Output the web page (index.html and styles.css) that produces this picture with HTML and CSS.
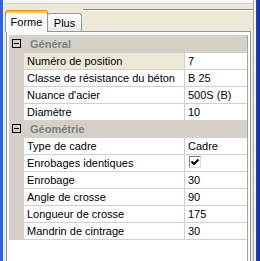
FILE: index.html
```html
<!DOCTYPE html>
<html lang="fr">
<head>
    <meta charset="UTF-8">
    <title>Propriétés</title>
    <link rel="stylesheet" href="styles.css">
</head>
<body>
    <div class="window">
        <div class="frame-left"></div>
        <div class="client">
            <div class="topbar"></div>
            <div class="tabstrip">
                <div class="tab active">Forme</div>
                <div class="tab">Plus</div>
                <div class="strip-line"></div>
            </div>
            <div class="panel">
                <div class="grid">
                    <div class="cat"><span class="toggle"></span><span class="cat-name">Général</span></div>
                    <div class="row selected"><span class="label">Numéro de position</span><span class="value">7</span></div>
                    <div class="row"><span class="label">Classe de résistance du béton</span><span class="value">B 25</span></div>
                    <div class="row"><span class="label">Nuance d'acier</span><span class="value">500S (B)</span></div>
                    <div class="row"><span class="label">Diamètre</span><span class="value">10</span></div>
                    <div class="cat"><span class="toggle"></span><span class="cat-name">Géométrie</span></div>
                    <div class="row"><span class="label">Type de cadre</span><span class="value">Cadre</span></div>
                    <div class="row">
                        <span class="label">Enrobages identiques</span>
                        <span class="value">
                            <span class="check">
                                <svg width="10" height="10" viewBox="0 0 10 10"><polyline points="1.5,4.5 4,7 8.5,2.5" fill="none" stroke="#000" stroke-width="2"/></svg>
                            </span>
                        </span>
                    </div>
                    <div class="row"><span class="label">Enrobage</span><span class="value">30</span></div>
                    <div class="row"><span class="label">Angle de crosse</span><span class="value">90</span></div>
                    <div class="row"><span class="label">Longueur de crosse</span><span class="value">175</span></div>
                    <div class="row"><span class="label">Mandrin de cintrage</span><span class="value">30</span></div>
                </div>
            </div>
        </div>
        <div class="frame-inner"></div>
        <div class="frame-right"></div>
    </div>
</body>
</html>
```

FILE: styles.css
```css
* {
    box-sizing: border-box;
}
html, body {
    margin: 0;
    height: 100%;
}
body {
    font-family: "Liberation Sans", Arial, sans-serif;
    font-size: 11px;
    color: #000;
    background-color: #ECE9D8;
    overflow: hidden;
}
.window {
    display: flex;
    height: 261px;
}
.frame-left {
    width: 3px;
    background-color: #2E62DF;
}
.frame-inner {
    width: 3px;
    border-left: 1px solid #ACA899;
    background-color: #F6F5F1;
}
.frame-right {
    width: 4px;
    background: linear-gradient(to right, #1446D6, #0B2FB5);
}
.client {
    flex: 1;
    display: flex;
    flex-direction: column;
    border-left: 1px solid #fff;
}
.topbar {
    height: 4px;
    background-color: #FAF9F5;
    border-bottom: 1px solid #D6D3C6;
}
.tabstrip {
    height: 27px;
    display: flex;
    align-items: flex-end;
    padding-left: 1px;
}
.tab {
    height: 18px;
    width: 35px;
    padding-top: 1px;
    line-height: 16px;
    text-align: center;
    border: 1px solid #919B9C;
    border-bottom: none;
    border-radius: 3px 3px 0 0;
    background: linear-gradient(#FFFFFF, #ECEBE6);
    margin-left: -1px;
}
.tab.active {
    position: relative;
    z-index: 1;
    height: 22px;
    width: 43px;
    margin-left: 0;
    margin-bottom: -1px;
    padding-top: 3px;
    border-top-color: #E68B2C;
    background: #FCFCFE;
    box-shadow: inset 0 2px 0 #FFC73C;
}
.strip-line {
    flex: 1;
    align-self: flex-start;
    margin-top: 5px;
    margin-left: 1px;
    height: 2px;
    border-top: 1px solid #8E8C80;
    border-bottom: 1px solid #FFFFFF;
}
.panel {
    flex: 1;
    display: flex;
    flex-direction: column;
    margin: 0 2px;
    padding: 3px 2px 0 2px;
    border: 1px solid #919B9C;
    border-bottom: none;
    background-color: #FCFCFE;
}
.grid {
    flex: 1;
    background-color: #fff;
    border-top: 1px solid #D4D0C8;
    border-right: 1px solid #A5A5A5;
}
.cat {
    height: 17px;
    display: flex;
    background-color: #D4D0C8;
}
.toggle {
    width: 9px;
    height: 9px;
    margin: 3px 0 0 3px;
    border: 1px solid #000;
    position: relative;
}
.toggle::after {
    content: "";
    position: absolute;
    left: 1px;
    top: 3px;
    width: 5px;
    height: 1px;
    background-color: #000;
}
.cat-name {
    margin-left: 9px;
    line-height: 16px;
    font-weight: bold;
    color: #808080;
}
.row {
    height: 17px;
    display: flex;
    border-left: 15px solid #D4D0C8;
}
.label {
    width: 160px;
    padding-left: 3px;
    line-height: 16px;
    white-space: nowrap;
    overflow: hidden;
    border-bottom: 1px solid #D4D0C8;
}
.row.selected .label {
    background-color: #ECE9D8;
}
.value {
    flex: 1;
    padding-left: 3px;
    line-height: 16px;
    white-space: nowrap;
    border-left: 1px solid #D4D0C8;
    border-bottom: 1px solid #D4D0C8;
}
.check {
    display: flex;
    align-items: center;
    justify-content: center;
    width: 12px;
    height: 12px;
    margin: 1px 0 0 1px;
    border: 1px solid;
    border-color: #808080 #E0DED4 #E0DED4 #808080;
    background-color: #fff;
}
```
